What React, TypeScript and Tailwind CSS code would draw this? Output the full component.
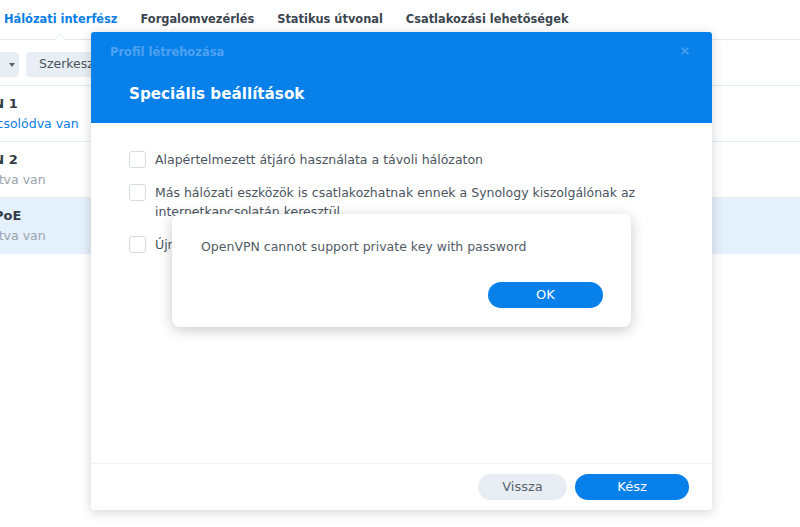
import { X } from 'lucide-react';

const tabs = ['Hálózati interfész', 'Forgalomvezérlés', 'Statikus útvonal', 'Csatlakozási lehetőségek'];

const rows = [
  { name: 'LAN 1', status: 'Kapcsolódva van', on: true, sel: false, off: '-ml-[27px]' },
  { name: 'LAN 2', status: 'Leválasztva van', on: false, sel: false, off: '-ml-[55px]' },
  { name: 'PPPoE', status: 'Leválasztva van', on: false, sel: true, off: '-ml-[55px]' },
];

function Checkbox() {
  return <span className="mt-[1px] h-[17px] w-[17px] shrink-0 rounded-[3px] border border-[#d3dbe4] bg-white" />;
}

export default function App() {
  return (
    <div className="relative h-[527px] w-[800px] overflow-hidden bg-white text-[#414b55] [font-family:'DejaVu_Sans',sans-serif]">
      {/* háttér oldal */}
      <div className="relative flex h-[40px] items-center gap-[23px] border-b border-[#e3e8ee] pl-[4px] text-[11.4px] font-bold">
        {tabs.map((t, i) => (
          <span key={t} className={i === 0 ? 'text-[#0a7ee6]' : 'text-[#3c4650]'}>{t}</span>
        ))}
        <span className="absolute bottom-[-1px] left-[54px] h-0 w-0 border-x-[6px] border-b-[6px] border-x-transparent border-b-[#e3e8ee]" />
        <span className="absolute bottom-[-1px] left-[55px] h-0 w-0 border-x-[5px] border-b-[5px] border-x-transparent border-b-white" />
      </div>
      <div className="flex h-[46px] items-start gap-[7px] border-b border-[#e3e8ee] pt-[12px] text-[12.5px]">
        <div className="flex h-[25px] w-[19px] items-center justify-end rounded-r-[4px] bg-[#e9eef4] pr-[4px]">
          <span className="h-0 w-0 border-x-[3px] border-t-[4px] border-x-transparent border-t-[#5a6470]" />
        </div>
        <div className="flex h-[25px] items-center rounded-[4px] bg-[#e9eef4] px-[13px] text-[#4a545e]">Szerkesztés</div>
      </div>
      {rows.map((r) => (
        <div
          key={r.name}
          className={`flex h-[56px] flex-col justify-center border-b border-[#e8edf2] ${r.sel ? 'bg-[#e4f0fc]' : ''}`}
        >
          <div className="-ml-[25px] text-[13px] font-bold leading-[20px] text-[#333c46]">{r.name}</div>
          <div className={`${r.off} text-[12.5px] leading-[20px] ${r.on ? 'text-[#0a7ee6]' : 'text-[#9aa3ad]'}`}>{r.status}</div>
        </div>
      ))}

      {/* Profil létrehozása ablak */}
      <div className="absolute left-[91px] top-[32px] flex h-[478px] w-[621px] flex-col rounded-[3px] bg-white shadow-[0_2px_12px_rgba(0,0,0,0.18)]">
        <div className="relative h-[91px] rounded-t-[3px] bg-[#0780ea]">
          <div className="absolute left-[19px] top-[12px] text-[11.5px] font-bold text-[#4ea2f0]">Profil létrehozása</div>
          <X className="absolute right-[21px] top-[13px] h-[12px] w-[12px] text-[#4ea2f0]" strokeWidth={3} />
          <div className="absolute left-[38px] top-[51px] text-[15.2px] font-bold text-white">Speciális beállítások</div>
        </div>
        <div className="flex flex-1 flex-col gap-[14px] px-[38px] pt-[27px] text-[12.5px] leading-[19px] text-[#4b5560]">
          <label className="flex gap-[9px]">
            <Checkbox />
            <span>Alapértelmezett átjáró használata a távoli hálózaton</span>
          </label>
          <label className="flex gap-[9px]">
            <Checkbox />
            <span className="w-[530px]">Más hálózati eszközök is csatlakozhatnak ennek a Synology kiszolgálónak az internetkapcsolatán keresztül</span>
          </label>
          <label className="flex gap-[9px]">
            <Checkbox />
            <span>Újrakapcsolódás engedélyezése</span>
          </label>
        </div>
        <div className="flex h-[47px] items-start justify-end gap-[8px] border-t border-[#eef1f5] pr-[23px] pt-[10px] text-[13px]">
          <button className="h-[26px] w-[89px] rounded-full bg-[#e8edf3] text-[#59636d]">Vissza</button>
          <button className="h-[26px] w-[114px] rounded-full bg-[#0780ea] text-white">Kész</button>
        </div>
      </div>

      {/* figyelmeztetés */}
      <div className="absolute left-[172px] top-[214px] flex h-[113px] w-[459px] flex-col rounded-[8px] bg-white px-[28px] pt-[24px] shadow-[0_3px_14px_rgba(0,0,0,0.22)]">
        <div className="pl-[1px] text-[12.5px] leading-[18px] text-[#525c66]">OpenVPN cannot support private key with password</div>
        <div className="mt-[26px] flex justify-end">
          <button className="h-[26px] w-[115px] rounded-full bg-[#0780ea] text-[13px] text-white">OK</button>
        </div>
      </div>
    </div>
  );
}
